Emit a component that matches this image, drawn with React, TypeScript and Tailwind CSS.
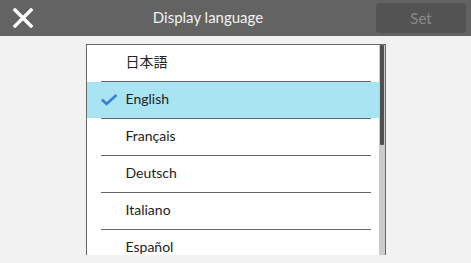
const languages = [
  { label: "日本語", selected: false },
  { label: "English", selected: true },
  { label: "Français", selected: false },
  { label: "Deutsch", selected: false },
  { label: "Italiano", selected: false },
  { label: "Español", selected: false },
];

function CloseIcon() {
  return (
    <svg width="22" height="20" viewBox="0 0 22 20" fill="none">
      <path d="M3 2 L19 18 M19 2 L3 18" stroke="#ffffff" strokeWidth="3.4" strokeLinecap="square" />
    </svg>
  );
}

function CheckIcon() {
  return (
    <svg width="17" height="12" viewBox="0 0 17 12" fill="none">
      <path d="M1 5.5 L5.5 10 L15.5 1" stroke="#3b7fd1" strokeWidth="2.6" />
    </svg>
  );
}

export default function App() {
  return (
    <div
      className="w-[471px] h-[263px] bg-[#f2f2f2] flex flex-col overflow-hidden"
      style={{ fontFamily: "Lato, 'Noto Sans CJK JP', sans-serif" }}
    >
      {/* Header */}
      <div className="h-[36px] bg-[#636363] flex items-center shrink-0">
        <div className="w-[40px] h-full flex items-center justify-center pl-[6px]">
          <CloseIcon />
        </div>
        <div className="flex-1 text-center text-[15px] text-[#f2f2f2] pb-[1px]">
          Display language
        </div>
        <div className="w-[95px] h-full flex items-center pr-[5px]">
          <button className="w-[90px] h-[30px] rounded-[4px] bg-[#535353] text-[#8a8a8a] text-[15px]">
            Set
          </button>
        </div>
      </div>

      {/* List */}
      <div className="pt-[8px] flex justify-center">
        <div className="w-[300px] h-[211px] bg-white border border-b-0 border-[#666666] flex overflow-hidden">
          <div className="flex-1 flex flex-col">
            {languages.map((lang, i) => (
              <div key={lang.label} className="shrink-0">
                {i > 0 && <div className="h-px w-[270px] ml-[14px] bg-[#666666]" />}
                <div
                  className={`h-[36px] flex items-center text-[14px] leading-none text-[#222222] ${
                    lang.selected ? "bg-[#a9e4f2]" : ""
                  }`}
                >
                  <div className="w-[39px] pl-[14px] flex items-center">
                    {lang.selected && <CheckIcon />}
                  </div>
                  <span className="pb-[3px]">{lang.label}</span>
                </div>
              </div>
            ))}
          </div>
          <div className="w-[6px] h-full bg-[#cccccc] flex justify-center">
            <div className="w-[4px] h-[100px] bg-[#505050] rounded-[1px]" />
          </div>
        </div>
      </div>
    </div>
  );
}
